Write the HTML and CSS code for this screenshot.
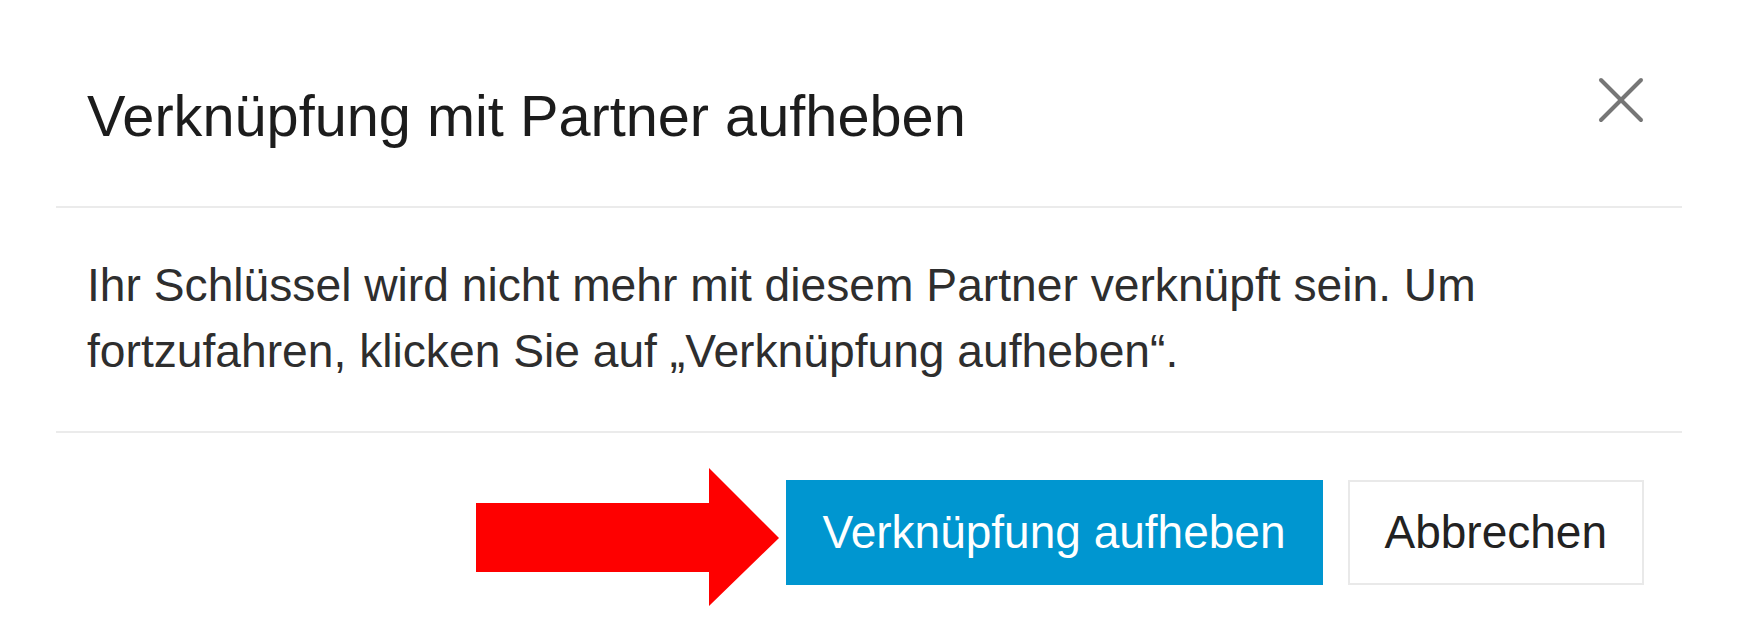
FILE: index.html
```html
<!DOCTYPE html>
<html lang="de">

<head>
    <meta charset="UTF-8">
    <meta name="viewport" content="width=device-width, initial-scale=1.0">
    <title>Verknüpfung aufheben</title>
    <link rel="stylesheet" href="styles.css">
</head>

<body>
    <div class="modal">
        <div class="modal-header">
            <h2 class="modal-title">Verknüpfung mit Partner aufheben</h2>
            <button class="close-btn" type="button" aria-label="Schließen">
                <svg width="46" height="46" viewBox="0 0 46 46">
                    <line x1="3" y1="3" x2="43" y2="43" />
                    <line x1="43" y1="3" x2="3" y2="43" />
                </svg>
            </button>
        </div>

        <div class="modal-body">
            <p>Ihr Schlüssel wird nicht mehr mit diesem Partner verknüpft sein. Um fortzufahren, klicken Sie auf „Verknüpfung aufheben“.</p>
        </div>

        <div class="modal-footer">
            <svg class="hint-arrow" width="303" height="138" viewBox="0 0 303 138">
                <polygon points="0,35 233,35 233,0 303,70 233,138 233,104 0,104" />
            </svg>
            <button class="btn btn-primary" type="button">Verknüpfung aufheben</button>
            <button class="btn btn-default" type="button">Abbrechen</button>
        </div>
    </div>
</body>

</html>
```

FILE: styles.css
```css
* {
    padding: 0;
    margin: 0;
    box-sizing: border-box;
}

body {
    background-color: #fff;
    font-family: 'Liberation Sans', Arial, sans-serif;
}

.modal {
    width: 1626px;
    margin-left: 56px;
}

.modal-header {
    display: flex;
    justify-content: space-between;
    align-items: flex-start;
    padding: 77px 38px 57px 31px;
    border-bottom: 2px solid #ebebeb;
}

.modal-title {
    padding-top: 6px;
    font-size: 57.7px;
    font-weight: normal;
    line-height: 66px;
    color: #1c1c1c;
}

.close-btn {
    display: block;
    width: 46px;
    height: 46px;
    border: none;
    background: none;
}

.close-btn svg {
    display: block;
    stroke: #767676;
    stroke-width: 4;
    stroke-linecap: round;
}

.modal-body {
    padding: 45px 95px 47px 31px;
    border-bottom: 2px solid #ebebeb;
}

.modal-body p {
    font-size: 46.2px;
    line-height: 65.6px;
    color: #2e2e2e;
}

.modal-footer {
    display: flex;
    justify-content: flex-end;
    align-items: flex-start;
    gap: 25px;
    padding: 47px 38px 40px 0;
}

.hint-arrow {
    display: block;
    margin-top: -12px;
    margin-right: -18px;
    fill: #fe0000;
}

.btn {
    height: 105px;
    padding: 0 35px;
    font-family: 'Liberation Sans', Arial, sans-serif;
    font-size: 46px;
    line-height: 101px;
    border: 2px solid transparent;
}

.btn-primary {
    background-color: #0096d0;
    border-color: #0096d0;
    color: #fff;
}

.btn-default {
    background-color: #fff;
    border-color: #e9e9e9;
    color: #222;
}
```
